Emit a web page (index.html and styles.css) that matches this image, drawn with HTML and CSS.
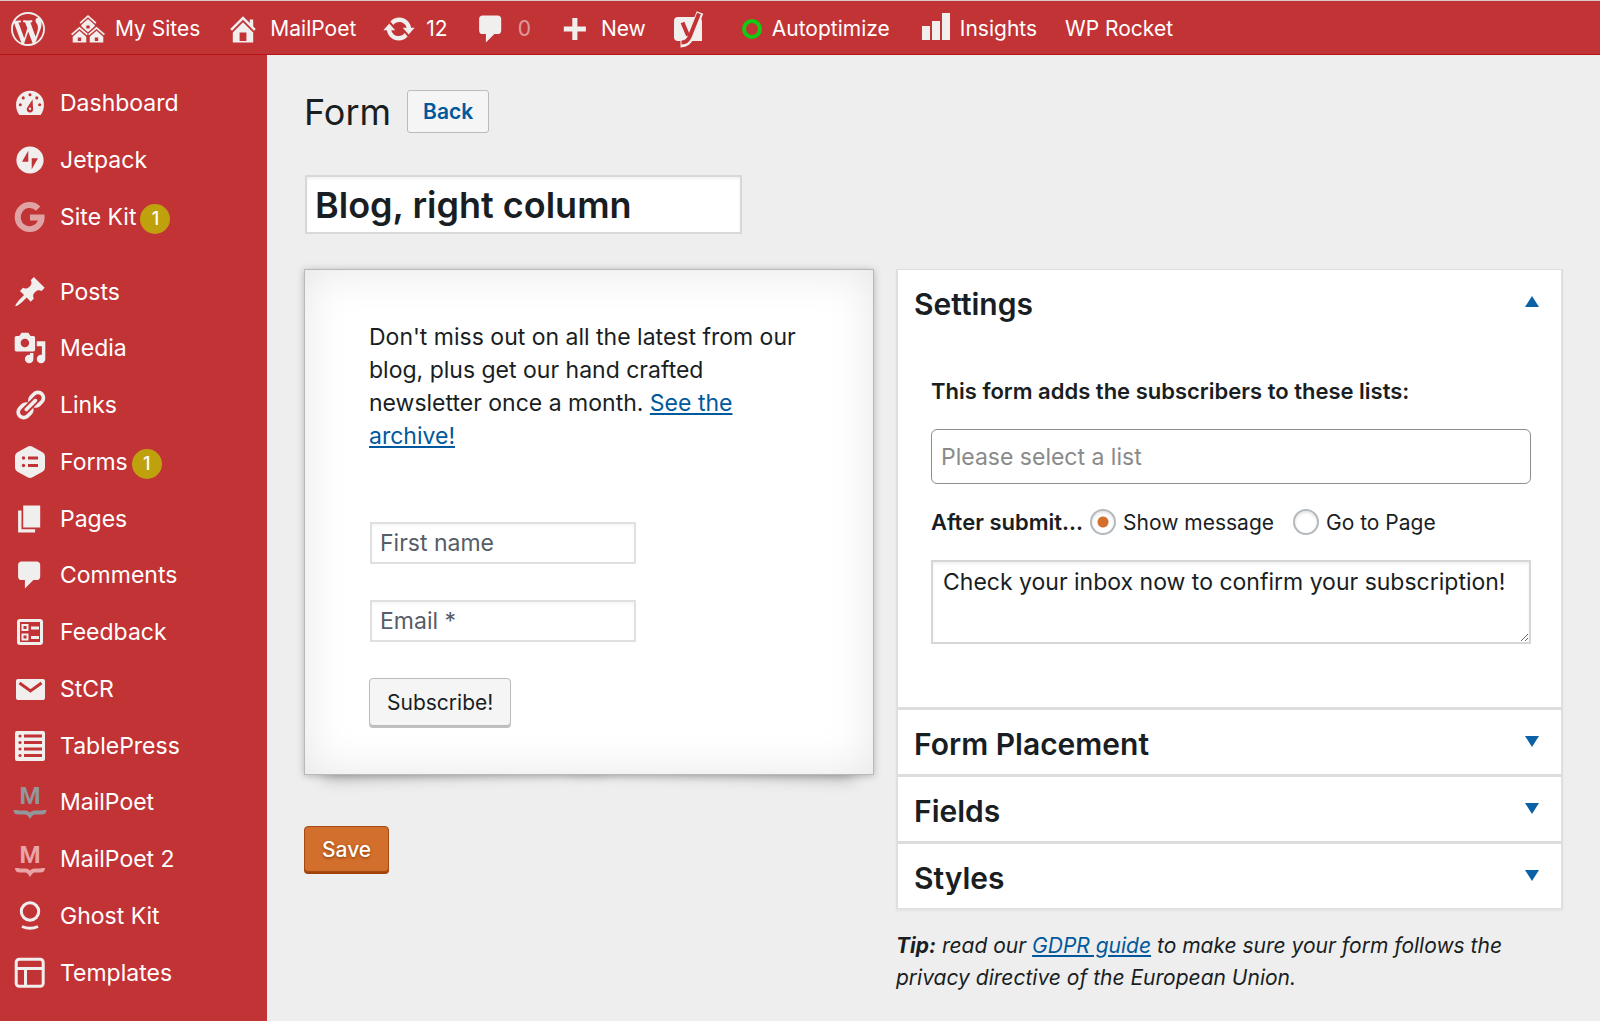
FILE: index.html
```html
<!DOCTYPE html>
<html lang="en">
<head>
  <meta charset="UTF-8" />
  <meta name="viewport" content="width=device-width, initial-scale=1.0"/>
  <title>Form - MailPoet</title>
  <link rel="stylesheet" href="styles.css">
</head>
<body>

  <header class="admin-bar">
    <a href="#" class="bar-item" aria-label="About WordPress">
      <svg class="icon" viewBox="0 0 20 20"><path d="M20 10c0-5.51-4.49-10-10-10C4.48 0 0 4.49 0 10c0 5.52 4.48 10 10 10 5.51 0 10-4.48 10-10zM7.78 15.37L4.37 6.22c.55-.02 1.17-.08 1.17-.08.5-.06.44-1.13-.06-1.11 0 0-1.45.11-2.37.11-.18 0-.37 0-.58-.01C4.12 2.69 6.87 1.11 10 1.11c2.33 0 4.45.87 6.05 2.34-.68-.11-1.65.39-1.65 1.58 0 .74.45 1.36.9 2.1.35.61.55 1.36.55 2.46 0 1.49-1.4 5-1.4 5l-3.03-8.37c.54-.02.82-.17.82-.17.5-.05.44-1.25-.06-1.22 0 0-1.44.12-2.38.12-.87 0-2.33-.12-2.33-.12-.5-.03-.56 1.2-.06 1.22l.92.08 1.26 3.41zM17.41 10c.24-.64.74-1.87.43-4.25.7 1.29 1.05 2.71 1.05 4.25 0 3.29-1.73 6.24-4.4 7.78.97-2.59 1.94-5.2 2.92-7.78zM6.1 18.09C3.12 16.65 1.11 13.53 1.11 10c0-1.3.23-2.48.72-3.59C3.25 10.3 4.67 14.2 6.1 18.09zm4.03-6.63l2.58 6.98c-.86.29-1.76.45-2.71.45-.79 0-1.57-.11-2.29-.33.81-2.38 1.62-4.74 2.42-7.1z"/></svg>
    </a>
    <a href="#" class="bar-item">
      <svg class="icon" viewBox="0 0 20 20"><path d="M14.27 6.87L10 3.14 5.73 6.87 5 6.14l5-4.38 5 4.38zM14 8.42l-4.05 3.43L6 8.38v-.74l4-3.5 4 3.5v.78zM11 9.7V8H9v1.7h2zm-1.73 4.03L5 10 .73 13.73 0 13l5-4.38L10 13zm10 0L15 10l-4.27 3.73L10 13l5-4.38L20 13zM5 11l4 3.5V18H1v-3.5zm10 0l4 3.5V18h-8v-3.5zm-9 6v-2H4v2h2zm10 0v-2h-2v2h2z"/></svg>
      <span>My Sites</span>
    </a>
    <a href="#" class="bar-item">
      <svg class="icon" viewBox="0 0 20 20"><path d="M16 8.5l1.53 1.53-1.06 1.06L10 4.6l-6.47 6.47-1.06-1.06L10 2.47l4 4v-2h2v4zm-6-2.46l6 5.99V18H4v-5.97zM12 17v-5H8v5h4z"/></svg>
      <span>MailPoet</span>
    </a>
    <a href="#" class="bar-item">
      <svg class="icon" viewBox="0 0 20 20"><path d="M10.2 3.28c3.53 0 6.43 2.61 6.92 6h2.08l-3.5 4-3.5-4h2.32c-.45-1.97-2.21-3.45-4.32-3.45-1.45 0-2.73.71-3.54 1.78L4.95 5.66C6.23 4.2 8.11 3.28 10.2 3.28zm-.4 13.44c-3.52 0-6.43-2.61-6.92-6H.8l3.5-4c1.17 1.33 2.33 2.67 3.5 4H5.48c.45 1.97 2.21 3.45 4.32 3.45 1.45 0 2.73-.71 3.54-1.78l1.71 1.95c-1.28 1.46-3.15 2.38-5.25 2.38z"/></svg>
      <span>12</span>
    </a>
    <a href="#" class="bar-item">
      <svg class="icon" viewBox="0 0 20 20"><path d="M5 2h9c1.1 0 2 .9 2 2v7c0 1.1-.9 2-2 2h-2l-5 5v-5H5c-1.1 0-2-.9-2-2V4c0-1.1.9-2 2-2z"/></svg>
      <span class="count-zero">0</span>
    </a>
    <a href="#" class="bar-item">
      <svg class="icon" viewBox="0 0 20 20"><path d="M17 8.500v3h-5v5H9v-5H4v-3h5v-5h3v5z"/></svg>
      <span>New</span>
    </a>
    <a href="#" class="bar-item" aria-label="SEO">
      <svg class="icon" viewBox="0 0 34 34">
        <path d="M6 5h19q5 0 5 5v19H6q-4 0-4-4V9q0-4 4-4z"/>
        <path class="seo-edge" d="M28 .500l-9.500 24q-2.500 7.500-10 7.500"/>
        <path class="seo-mark" d="M27 1.500l-9 22.500q-2.500 6.500-8.500 6.500M10.500 10.500l5.500 13"/>
      </svg>
    </a>
    <a href="#" class="bar-item autoptimize">
      <span class="ring"></span>
      <span>Autoptimize</span>
    </a>
    <a href="#" class="bar-item insights">
      <svg class="icon-bars" viewBox="0 0 28 34"><path d="M0 18h8v14H0zM10 13h8v19h-8zM20 5h8v27h-8z"/></svg>
      <span>Insights</span>
    </a>
    <a href="#" class="bar-item">WP Rocket</a>
  </header>

  <div class="layout">

    <nav class="sidebar">
      <ul class="menu">
        <li><a href="#">
          <svg class="icon" viewBox="0 0 20 20">
            <path d="M3.760 17h12.480c1.340-1.630 1.960-3.730 1.960-6a8.200 8.200 0 0 0-16.400 0c0 2.270.620 4.370 1.960 6z"/>
            <g class="cut"><circle cx="10" cy="5.200" r=".9"/><circle cx="6" cy="7" r=".9"/><circle cx="14" cy="7" r=".9"/><circle cx="4.300" cy="11" r=".9"/><circle cx="15.700" cy="11" r=".9"/><path d="M11.500 8l.300 5.200a1.900 1.900 0 1 1-3.400-.500z"/></g>
            <circle cx="10" cy="13.400" r=".7"/>
          </svg>
          <span>Dashboard</span></a></li>
        <li><a href="#">
          <svg class="icon" viewBox="0 0 20 20"><circle cx="10" cy="10" r="8"/><path class="cut" d="M9 4.500v6.500H5.300zM11 15.500V9h3.700z"/></svg>
          <span>Jetpack</span></a></li>
        <li><a href="#">
          <svg class="icon faded" viewBox="0 0 34 34"><path d="M17 14.500h14.500Q32.500 22 27.500 27.500A15 15 0 1 1 27.300 6.500l-4.300 4.200A9 9 0 1 0 25 20.500h-8z"/></svg>
          <span>Site Kit</span><span class="badge">1</span></a></li>
        <li class="separator"></li>
        <li><a href="#">
          <svg class="icon" viewBox="0 0 20 20"><path d="M10.440 3.020l1.820-1.820 6.360 6.350-1.830 1.820c-1.050-.68-2.480-.57-3.410.36l-.75.75c-.92.93-1.040 2.350-.35 3.410l-1.830 1.820-2.410-2.410-2.800 2.790c-.42.42-3.380 2.710-3.800 2.290s1.860-3.390 2.280-3.810l2.790-2.790L4.100 9.360l1.830-1.820c1.050.69 2.480.57 3.400-.36l.75-.75c.93-.92 1.050-2.350.36-3.410z"/></svg>
          <span>Posts</span></a></li>
        <li><a href="#">
          <svg class="icon" viewBox="0 0 20 20"><path d="M13 11V4c0-.55-.45-1-1-1h-1.670L9 1H5L3.670 3H2c-.55 0-1 .45-1 1v7c0 .55.45 1 1 1h10c.55 0 1-.45 1-1zM7 4.500c1.380 0 2.500 1.120 2.500 2.500S8.380 9.500 7 9.500 4.500 8.380 4.500 7 5.620 4.500 7 4.500zM14 6h5v10.500c0 1.380-1.120 2.500-2.500 2.500S14 17.880 14 16.500s1.120-2.500 2.500-2.500c.17 0 .34.020.5.050V9h-3V6zm-4 8.050V13h2v3.500c0 1.380-1.120 2.500-2.500 2.500S7 17.880 7 16.500 8.120 14 9.500 14c.17 0 .34.020.5.050z"/></svg>
          <span>Media</span></a></li>
        <li><a href="#">
          <svg class="icon" viewBox="0 0 20 20"><path d="M17.740 2.760c1.680 1.690 1.680 4.410 0 6.100l-1.530 1.520c-1.120 1.120-2.700 1.470-4.140 1.090l2.620-2.610.76-.77.76-.76c.84-.84.84-2.200 0-3.040-.84-.85-2.200-.85-3.040 0l-.77.76-3.380 3.380c-.37-1.440-.020-3.020 1.100-4.140l1.520-1.530c1.690-1.680 4.420-1.680 6.100 0zM8.590 13.430l5.340-5.340c.42-.42.42-1.100 0-1.520-.44-.43-1.130-.39-1.530 0l-5.330 5.340c-.42.42-.42 1.100 0 1.520.44.43 1.130.39 1.520 0zm-.76 2.290l4.140-4.150c.38 1.440.030 3.020-1.090 4.140l-1.520 1.530c-1.690 1.680-4.410 1.680-6.100 0-1.680-1.680-1.680-4.420 0-6.100l1.530-1.520c1.120-1.120 2.700-1.470 4.140-1.100l-4.140 4.150c-.85.84-.85 2.200 0 3.050.84.84 2.200.84 3.040 0z"/></svg>
          <span>Links</span></a></li>
        <li><a href="#">
          <svg class="icon" viewBox="0 0 34 34">
            <path d="M14.500 1.700q2.500-1.400 5 0l10 5.600q2.500 1.500 2.500 4v11.400q0 2.500-2.500 4l-10 5.600q-2.500 1.400-5 0l-10-5.600q-2.500-1.500-2.500-4V11.300q0-2.500 2.500-4z"/>
            <path class="cut" d="M15 11.500h10v3H15zM15 19h10v3H15z"/><circle class="cut" cx="10.500" cy="13" r="1.700"/><circle class="cut" cx="10.500" cy="20.500" r="1.700"/>
          </svg>
          <span>Forms</span><span class="badge">1</span></a></li>
        <li><a href="#">
          <svg class="icon" viewBox="0 0 20 20"><path d="M6 15V2h10v13H6zm-1 1h8v2H3V5h2v11z"/></svg>
          <span>Pages</span></a></li>
        <li><a href="#">
          <svg class="icon" viewBox="0 0 20 20"><path d="M5 2h9c1.100 0 2 .9 2 2v7c0 1.100-.9 2-2 2h-2l-5 5v-5H5c-1.100 0-2-.9-2-2V4c0-1.100.9-2 2-2z"/></svg>
          <span>Comments</span></a></li>
        <li><a href="#">
          <svg class="icon" viewBox="0 0 34 34">
            <rect class="outline" x="5.500" y="5.500" width="23" height="23" rx="1.500"/>
            <path class="outline thin" d="M9.500 10h5v5h-5zM9.500 19.500h5v5h-5z"/>
            <path d="M18 11.500h8v3h-8zM18 21h8v3h-8z"/>
          </svg>
          <span>Feedback</span></a></li>
        <li><a href="#">
          <svg class="icon" viewBox="0 0 34 34"><rect x="3" y="7" width="29" height="21" rx="2"/><path class="cut-line" d="M6.500 11l11 8 11-8"/></svg>
          <span>StCR</span></a></li>
        <li><a href="#">
          <svg class="icon" viewBox="0 0 34 34">
            <rect x="2" y="2" width="30" height="30" rx="2"/>
            <path class="cut" d="M11 5.500h18v3H11zM11 12h18v3H11zM11 18.500h18v3H11zM11 25h18v3H11z"/>
            <g class="cut"><circle cx="7" cy="7" r="1.600"/><circle cx="7" cy="13.500" r="1.600"/><circle cx="7" cy="20" r="1.600"/><circle cx="7" cy="26.500" r="1.600"/></g>
          </svg>
          <span>TablePress</span></a></li>
        <li><a href="#">
          <svg class="icon mailpoet-mark" viewBox="0 0 34 34"><text x="17" y="19" text-anchor="middle">M</text><path d="M2.500 25q0 2.500 3 2.500h6.500q3 0 5 3 2-3 5-3h6.500q3 0 3-2.500"/></svg>
          <span>MailPoet</span></a></li>
        <li><a href="#">
          <svg class="icon mailpoet-mark old" viewBox="0 0 34 34"><text x="17" y="21" text-anchor="middle">M</text><path d="M4 26q0 2.500 3 2.500h5.500q2.500 0 4.500 3 2-3 4.500-3H27q3 0 3-2.500"/></svg>
          <span>MailPoet 2</span></a></li>
        <li><a href="#">
          <svg class="icon" viewBox="0 0 34 34"><circle class="outline" cx="17" cy="12.500" r="8.700"/><path class="outline" d="M9 27.500q8 3.500 16 0"/></svg>
          <span>Ghost Kit</span></a></li>
        <li><a href="#">
          <svg class="icon" viewBox="0 0 34 34"><rect class="outline" x="3.200" y="3.200" width="27" height="27" rx="3"/><path class="outline" d="M3 12.500h27M12.500 12.500v17"/></svg>
          <span>Templates</span></a></li>
      </ul>
    </nav>

    <main class="content">
      <div class="page-head">
        <h1>Form</h1>
        <a href="#" class="back-btn">Back</a>
      </div>

      <input type="text" class="form-name" value="Blog, right column" aria-label="Form name" />

      <div class="columns">
        <div class="editor">
          <form class="preview" id="previewForm">
            <p>Don't miss out on all the latest from our blog, plus get our hand crafted newsletter once a month. <a href="#">See the archive!</a></p>
            <input type="text" placeholder="First name" aria-label="First name" />
            <input type="text" placeholder="Email *" aria-label="Email" />
            <button type="submit" class="subscribe-btn">Subscribe!</button>
          </form>
          <button type="button" class="save-btn">Save</button>
        </div>

        <div class="options">
          <div class="panels">
            <section>
              <button type="button" class="panel-head open"><span>Settings</span></button>
              <div class="panel-body">
                <label for="lists" class="field-label">This form adds the subscribers to these lists:</label>
                <input type="text" id="lists" class="list-select" placeholder="Please select a list" />
                <div class="after-submit">
                  <strong>After submit...</strong>
                  <label><input type="radio" name="onSuccess" checked /> Show message</label>
                  <label><input type="radio" name="onSuccess" /> Go to Page</label>
                </div>
                <textarea class="message" aria-label="Message">Check your inbox now to confirm your subscription!</textarea>
              </div>
            </section>
            <section>
              <button type="button" class="panel-head"><span>Form Placement</span></button>
            </section>
            <section>
              <button type="button" class="panel-head"><span>Fields</span></button>
            </section>
            <section>
              <button type="button" class="panel-head"><span>Styles</span></button>
            </section>
          </div>
          <p class="tip"><strong>Tip:</strong> read our <a href="#">GDPR guide</a> to make sure your form follows the privacy directive of the European Union.</p>
        </div>
      </div>
    </main>

  </div>

</body>
</html>
```

FILE: styles.css
```css
* {
  box-sizing: border-box;
}

body {
  margin: 0;
  min-height: 100vh;
  display: flex;
  flex-direction: column;
  font-family: Inter, "Liberation Sans", sans-serif;
  font-size: 23px;
  color: #191e23;
  background-color: #eee;
}

input, button, textarea {
  font-family: inherit;
  font-size: inherit;
  color: inherit;
}

a {
  color: #00599c;
}

/* Icons */

.icon {
  width: 34px;
  height: 34px;
  flex: none;
  overflow: visible;
  fill: #f1eeee;
}

.cut {
  fill: #c23336;
}

.cut-line {
  fill: none;
  stroke: #c23336;
  stroke-width: 3;
}

.seo-edge {
  fill: none;
  stroke: #f1eeee;
  stroke-width: 7;
}

.seo-mark {
  fill: none;
  stroke: #c23336;
  stroke-width: 4;
}

.outline {
  fill: none;
  stroke: #f1eeee;
  stroke-width: 3;
}

.outline.thin {
  stroke-width: 2;
}

.faded {
  opacity: 0.6;
}

.mailpoet-mark {
  fill: #93969a;
  font-family: Roboto, sans-serif;
  font-size: 24px;
  font-weight: 700;
}

.mailpoet-mark path {
  fill: none;
  stroke: #93969a;
  stroke-width: 4;
}

.mailpoet-mark.old {
  fill: #e9a5a6;
}

.mailpoet-mark.old path {
  stroke: #e9a5a6;
}

/* Top bar */

.admin-bar {
  height: 55px;
  display: flex;
  align-items: center;
  gap: 26px;
  padding: 2px 11px 0;
  background-color: #c23336;
  border-top: 1px solid #d8cccc;
  border-bottom: 1px solid #b81417;
  font-size: 21px;
}

.bar-item {
  display: flex;
  align-items: center;
  gap: 10px;
  color: #fff;
  text-decoration: none;
  white-space: nowrap;
}

.count-zero {
  opacity: 0.5;
}

.ring {
  width: 20px;
  height: 20px;
  border: 4px solid #14c814;
  border-radius: 50%;
}

.autoptimize {
  margin-left: 10px;
}

.insights {
  margin: 0 2px 0 6px;
}

.icon-bars {
  width: 28px;
  height: 34px;
  margin-bottom: 8px;
  fill: #f1eeee;
}

/* Side menu */

.layout {
  flex: 1;
  display: flex;
}

.sidebar {
  width: 267px;
  flex: none;
  display: flex;
  padding: 20px 0;
  background-color: #c23336;
}

.menu {
  flex: 1;
  display: flex;
  flex-direction: column;
  list-style: none;
  margin: 0;
  padding: 0;
}

.menu li {
  flex: 1;
  display: flex;
}

.menu .separator {
  flex: none;
  height: 18px;
}

.menu a {
  flex: 1;
  display: flex;
  align-items: center;
  padding-left: 13px;
  color: #fff;
  text-decoration: none;
}

.menu .icon {
  margin-right: 13px;
}

.badge {
  width: 30px;
  height: 30px;
  margin: 4px 0 0 4px;
  border-radius: 50%;
  background-color: #bfa10e;
  font-size: 18px;
  font-weight: 500;
  line-height: 30px;
  text-align: center;
}

/* Content */

.content {
  flex: 1;
  padding: 35px 37px 0;
}

.page-head {
  display: flex;
  align-items: center;
  gap: 16px;
  height: 43px;
  margin-bottom: 42px;
}

h1 {
  margin: 0;
  font-size: 36px;
  font-weight: 400;
}

.back-btn {
  padding: 0 15px;
  border: 1px solid #bbb;
  border-radius: 3px;
  background-color: #f5f5f5;
  font-size: 21px;
  font-weight: 600;
  line-height: 41px;
  text-decoration: none;
}

.form-name {
  display: block;
  width: 437px;
  height: 59px;
  margin: 0 0 35px 1px;
  padding: 0 8px;
  border: 2px solid #d8d8d8;
  background-color: #fff;
  box-shadow: inset 0 2px 3px rgba(0, 0, 0, 0.06);
  font-size: 36px;
  font-weight: 600;
}

.columns {
  display: grid;
  grid-template-columns: 570fr 667fr;
  gap: 22px;
  align-items: start;
}

.editor {
  position: relative;
  z-index: 0;
}

.preview {
  position: relative;
  display: flex;
  flex-direction: column;
  align-items: flex-start;
  padding: 51px 64px 48px;
  border: 1px solid #b9b9b9;
  background-color: #fff;
  box-shadow: 0 1px 7px rgba(0, 0, 0, 0.25), inset 0 0 45px rgba(0, 0, 0, 0.1);
}

/* lifted corners under the preview */
.preview::before,
.preview::after {
  content: "";
  position: absolute;
  z-index: -1;
  bottom: 18px;
  left: 18px;
  width: 50%;
  height: 40px;
  box-shadow: 0 18px 16px rgba(0, 0, 0, 0.25);
  transform: rotate(-2deg);
}

.preview::after {
  left: auto;
  right: 18px;
  transform: rotate(2deg);
}

.preview p {
  margin: 0 0 69px;
  line-height: 33px;
}

.preview input {
  width: 266px;
  height: 42px;
  margin: 0 0 36px 1px;
  padding: 0 8px;
  border: 2px solid #e0e0e0;
  background-color: #fff;
  box-shadow: inset 0 2px 3px rgba(0, 0, 0, 0.04);
}

.preview input::placeholder {
  color: #555d66;
}

.subscribe-btn {
  height: 48px;
  padding: 0 17px;
  border: 1px solid #bbb;
  border-radius: 4px;
  background-color: #f5f5f5;
  box-shadow: 0 2px 0 #c0c0c0;
  font-size: 21px;
}

.save-btn {
  display: block;
  height: 46px;
  margin-top: 51px;
  padding: 0 17px;
  border: 1px solid #a84a14;
  border-radius: 4px;
  background-color: #d36f2c;
  box-shadow: 0 2px 0 #a04308;
  color: #fff;
  font-size: 21px;
  font-weight: 500;
  text-shadow: 0 1px 3px #8a3a05;
}

/* Settings panels */

.panels {
  border: 2px solid #dfdfdf;
  border-width: 1px 2px;
  background-color: #fff;
  box-shadow: 0 2px 2px rgba(0, 0, 0, 0.05);
}

.panels section + section {
  border-top: 3px solid #ddd;
}

.panel-head {
  width: 100%;
  height: 64px;
  display: flex;
  justify-content: space-between;
  align-items: center;
  padding: 4px 22px 0 16px;
  border: none;
  background: none;
  font-size: 30px;
  font-weight: 600;
}

.panel-head::after {
  content: "";
  margin-bottom: 6px;
  border: 7px solid transparent;
  border-top: 11px solid #0a61a3;
  border-bottom: none;
}

.panel-head.open::after {
  border-top: none;
  border-bottom: 11px solid #0a61a3;
}

.panel-body {
  padding: 41px 30px 63px 33px;
}

.field-label {
  display: block;
  margin-bottom: 22px;
  font-size: 22px;
  font-weight: 600;
  line-height: 32px;
}

.list-select {
  display: block;
  width: 100%;
  height: 55px;
  margin-bottom: 22px;
  padding: 0 9px;
  border: 1px solid #8e8e8e;
  border-radius: 6px;
  background-color: #fff;
}

.list-select::placeholder {
  color: #8a8a8a;
}

.after-submit {
  display: flex;
  align-items: center;
  gap: 7px;
  height: 32px;
  margin-bottom: 22px;
  font-size: 21px;
  white-space: nowrap;
}

.after-submit strong {
  font-size: 22px;
  font-weight: 600;
}

.after-submit label {
  display: flex;
  align-items: center;
  gap: 7px;
  margin-right: 12px;
}

.after-submit input {
  appearance: none;
  width: 26px;
  height: 26px;
  margin: 0;
  border: 2px solid #b4b9be;
  border-radius: 50%;
  background-color: #fff;
  box-shadow: inset 0 2px 3px rgba(0, 0, 0, 0.1);
}

.after-submit input:checked {
  background-image: radial-gradient(circle, #d36f2c 5px, transparent 6px);
}

.message {
  display: block;
  width: 100%;
  height: 84px;
  padding: 6px 10px;
  border: 2px solid #d6d6d6;
  background-color: #fff;
  box-shadow: inset 0 2px 3px rgba(0, 0, 0, 0.06);
  line-height: 28px;
  resize: vertical;
}

.tip {
  margin: 21px 0 0;
  font-size: 21px;
  font-style: italic;
  line-height: 32px;
}
```
